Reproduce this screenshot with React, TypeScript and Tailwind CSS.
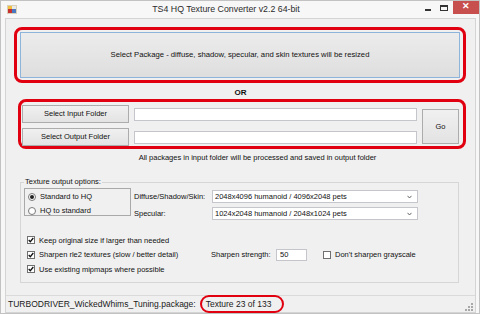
import React from 'react';

const ui = "font-['Liberation_Sans',Arial,sans-serif]";

function WinButton({ children, className = '' }: { children: React.ReactNode; className?: string }) {
  return (
    <div
      className={`flex items-center justify-center border border-[#acacac] bg-gradient-to-b from-[#f0f0f0] to-[#e3e3e3] text-[7.5px] text-[#111] ${className}`}
    >
      {children}
    </div>
  );
}

function TextBox({ className = '', value = '' }: { className?: string; value?: string }) {
  return (
    <div className={`flex items-center border border-[#c4c6cc] bg-white px-[3px] text-[7.5px] text-[#111] ${className}`}>
      {value}
    </div>
  );
}

function Combo({ value }: { value: string }) {
  return (
    <div className="flex h-[13px] w-[206px] items-center justify-between border border-[#c4c6cc] bg-white pl-[2px] pr-[5px] text-[7.5px] text-[#111]">
      <span>{value}</span>
      <svg width="5" height="4" viewBox="0 0 5 4">
        <path d="M0.5 0.8 L2.5 3 L4.5 0.8" fill="none" stroke="#555" strokeWidth="0.9" />
      </svg>
    </div>
  );
}

function Radio({ checked, label }: { checked?: boolean; label: string }) {
  return (
    <div className="flex h-[12px] items-center">
      <div className="ml-[3px] flex h-[8px] w-[8px] items-center justify-center rounded-full border border-[#7a7a7a] bg-white">
        {checked && <div className="h-[4px] w-[4px] rounded-full bg-[#222]" />}
      </div>
      <span className="ml-[4px]">{label}</span>
    </div>
  );
}

function Check({ checked, label }: { checked?: boolean; label: string }) {
  return (
    <div className="flex items-center">
      <div className="flex h-[8px] w-[8px] items-center justify-center border border-[#707070] bg-white">
        {checked && (
          <svg width="6" height="6" viewBox="0 0 6 6">
            <path d="M0.7 3 L2.3 4.7 L5.3 1" fill="none" stroke="#111" strokeWidth="1.3" />
          </svg>
        )}
      </div>
      <span className="ml-[4px]">{label}</span>
    </div>
  );
}

export default function App() {
  return (
    <div className={`${ui} h-[314px] w-[480px] overflow-hidden border border-[#c2c2c2] bg-[#f7f7f7]`}>
      {/* title bar */}
      <div className="relative flex h-[17px] items-center">
        <svg className="ml-[6px]" width="10" height="9" viewBox="0 0 10 9">
          <rect x="0" y="0" width="10" height="9" fill="#d8d0b8" />
          <rect x="1" y="1" width="4" height="3" fill="#f0c040" />
          <rect x="5" y="1" width="4" height="3" fill="#e8e8e8" />
          <rect x="1" y="4" width="4" height="4" fill="#c83030" />
          <rect x="5" y="4" width="4" height="4" fill="#4a78c0" />
        </svg>
        <div className="flex-1 pl-[10px] text-center text-[8.8px] text-[#2b2b2b]">TS4 HQ Texture Converter v2.2 64-bit</div>
        <div className="flex h-full items-start">
          <div className="mt-[8px] mr-[9px] h-[1.5px] w-[6px] bg-[#333]" />
          <div className="mt-[4px] mr-[5px] h-[6px] w-[8px] border border-[#333] border-t-2" />
          <div className="-mt-[1px] flex h-[14px] w-[26px] items-center justify-center bg-[#c74f4e] text-[9px] font-bold text-white">
            ✕
          </div>
        </div>
      </div>

      {/* client area */}
      <div className="ml-[4px] flex h-[295px] w-[471px] flex-col border border-[#d4d4d4] bg-[#f0f0f0] text-[7.5px] text-[#111]">
        <div className="mt-[8px] ml-[8px] h-[56px] w-[452px] rounded-[8px] border-[3px] border-[#e1000f] px-[3px] py-[2px]">
          <div className="flex h-full w-full items-center justify-center border border-[#8db4da] bg-gradient-to-b from-[#ececec] to-[#dedede] text-[7.7px]">
            Select Package - diffuse, shadow, specular, and skin textures will be resized
          </div>
        </div>

        <div className="h-[16px] pt-[4px] text-center text-[8px] leading-[12px] font-bold">OR</div>

        <div className="ml-[12px] flex h-[50px] w-[448px] rounded-[8px] border-[3px] border-[#e1000f] pt-[3px] pl-[1px]">
          <div className="flex flex-col gap-[5px]">
            <div className="flex items-center gap-[5px]">
              <WinButton className="h-[18px] w-[107px]">Select Input Folder</WinButton>
              <TextBox className="h-[13px] w-[283px]" />
            </div>
            <div className="flex items-center gap-[5px]">
              <WinButton className="h-[18px] w-[107px]">Select Output Folder</WinButton>
              <TextBox className="h-[13px] w-[283px]" />
            </div>
          </div>
          <WinButton className="mt-[4px] ml-[5px] h-[35px] w-[37px]">Go</WinButton>
        </div>

        <div className="h-[18px] pl-[34px] text-center leading-[18px]">
          All packages in input folder will be processed and saved in output folder
        </div>

        <fieldset className="mt-[10px] ml-[14px] h-[106px] w-[439px] border border-[#d6d6d6]">
          <legend className="ml-[3px] px-[1px] leading-[10px]">Texture output options:</legend>
          <div className="mt-[1px] flex">
            <div className="ml-[3px] h-[28px] w-[107px] border border-[#a9a9a9] pt-[2px]">
              <Radio checked label="Standard to HQ" />
              <div className="h-[2px]" />
              <Radio label="HQ to standard" />
            </div>
            <div className="mt-[2px] ml-[3px] flex flex-col gap-[4px]">
              <div className="flex items-center">
                <span className="w-[78px]">Diffuse/Shadow/Skin:</span>
                <Combo value="2048x4096 humanoid / 4096x2048 pets" />
              </div>
              <div className="flex items-center">
                <span className="w-[78px]">Specular:</span>
                <Combo value="1024x2048 humanoid / 2048x1024 pets" />
              </div>
            </div>
          </div>

          <div className="mt-[13px] pl-[6px]">
            <div className="flex h-[14.5px] items-center">
              <Check checked label="Keep original size if larger than needed" />
            </div>
            <div className="flex h-[14.5px] items-center">
              <div className="w-[184px]">
                <Check checked label="Sharpen rle2 textures (slow / better detail)" />
              </div>
              <span className="w-[65px]">Sharpen strength:</span>
              <TextBox className="h-[12px] w-[31px]" value="50" />
              <div className="ml-[16px]">
                <Check label="Don't sharpen grayscale" />
              </div>
            </div>
            <div className="flex h-[14.5px] items-center">
              <Check checked label="Use existing mipmaps where possible" />
            </div>
          </div>
        </fieldset>

        <div className="mt-auto flex h-[17px] items-center border-t border-[#dadada] pl-[2px] text-[8.5px] text-[#1a1a1a]">
          <span>TURBODRIVER_WickedWhims_Tuning.package:</span>
          <span className="ml-[4px] flex h-[18px] items-center rounded-[9px] border-[2.5px] border-[#e1000f] pl-[4px] pr-[11px]">
            Texture 23 of 133
          </span>
          <svg className="mr-[2px] ml-auto mt-[6px]" width="8" height="8" viewBox="0 0 8 8">
            {[
              [6, 0],
              [6, 3],
              [3, 3],
              [6, 6],
              [3, 6],
              [0, 6],
            ].map(([x, y]) => (
              <rect key={`${x}-${y}`} x={x} y={y} width="2" height="2" fill="#a8a8a8" />
            ))}
          </svg>
        </div>
      </div>
    </div>
  );
}
